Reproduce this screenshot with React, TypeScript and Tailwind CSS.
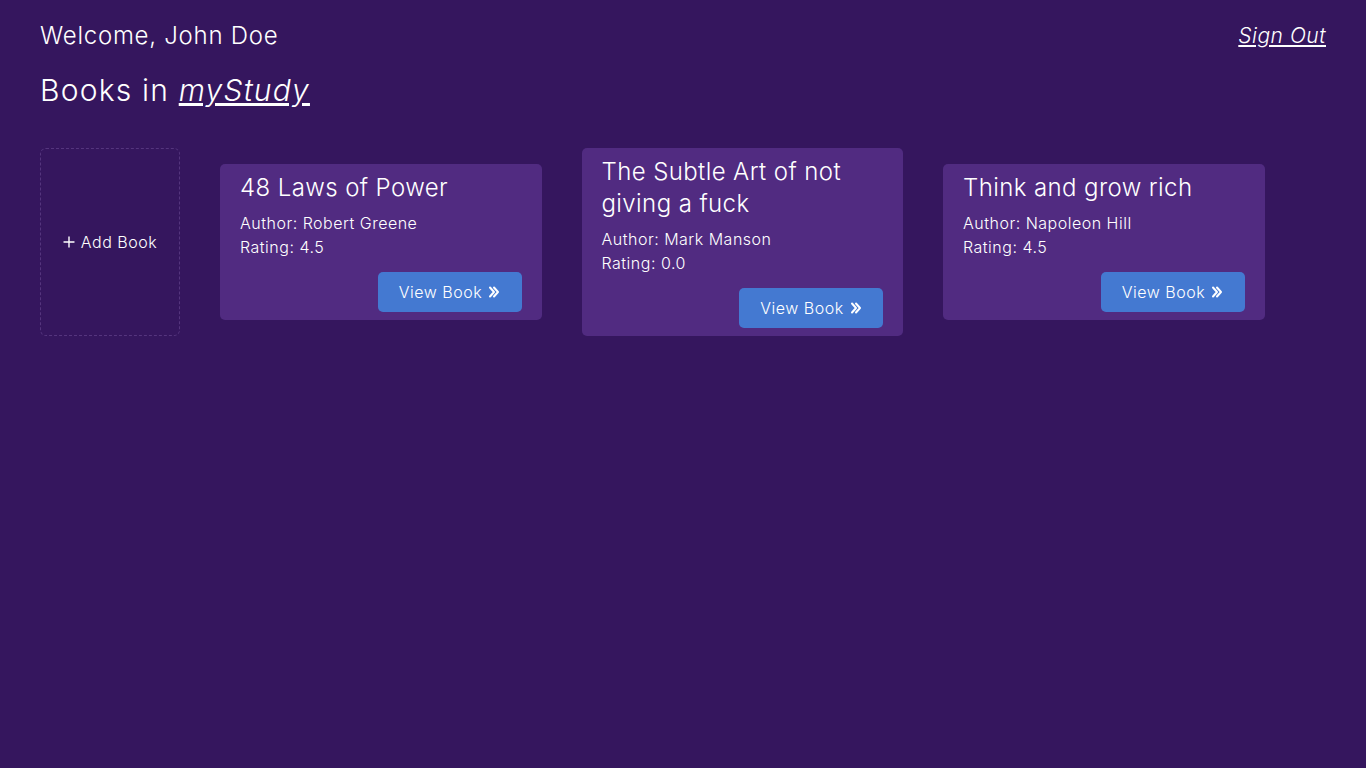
import React from "react";

const books = [
  { title: "48 Laws of Power", author: "Robert Greene", rating: "4.5" },
  { title: "The Subtle Art of not giving a fuck", author: "Mark Manson", rating: "0.0" },
  { title: "Think and grow rich", author: "Napoleon Hill", rating: "4.5" },
];

function Chevrons() {
  return (
    <svg width="12" height="14" viewBox="0 0 12 14" fill="none" stroke="currentColor" strokeWidth="2" strokeLinecap="round" strokeLinejoin="round">
      <path d="M2 2.5 L6 7 L2 11.5" />
      <path d="M6 2.5 L10 7 L6 11.5" />
    </svg>
  );
}

function Plus() {
  return (
    <svg width="12" height="12" viewBox="0 0 12 12" fill="none" stroke="currentColor" strokeWidth="1.4" strokeLinecap="round">
      <path d="M6 1 V11" />
      <path d="M1 6 H11" />
    </svg>
  );
}

export default function App() {
  return (
    <div className="min-h-screen w-full bg-[#35165e] text-white px-10 pt-[19px]" style={{ fontFamily: "Inter, 'Noto Sans', sans-serif" }}>
      <div className="flex items-center justify-between">
        <div className="text-[24px] leading-[34px] font-light tracking-[0.75px]">Welcome, John Doe</div>
        <a className="text-[21px] leading-[34px] italic underline font-light tracking-[0.5px] cursor-pointer">Sign Out</a>
      </div>
      <h1 className="mt-[18px] text-[30px] leading-[38px] font-light tracking-[1.2px]">
        Books in <span className="italic underline">myStudy</span>
      </h1>
      <div className="mt-[39px] flex items-center gap-10">
        <div className="self-stretch w-[140px] border border-dashed border-[#55357e] rounded-md flex items-center justify-center text-[16px] font-light gap-[6px] tracking-[0.5px]">
          <Plus />
          <span>Add Book</span>
        </div>
        {books.map((b) => (
          <div key={b.title} className="w-[321.5px] bg-[#512b81] rounded-[5px] px-5 pt-2 pb-2 flex flex-col">
            <div className="text-[24px] leading-[32px] font-light tracking-[0.4px]">{b.title}</div>
            <div className="mt-[7px] text-[16px] leading-[24px] font-light tracking-[0.5px]">Author: {b.author}</div>
            <div className="text-[16px] leading-[24px] font-light tracking-[0.5px]">Rating: {b.rating}</div>
            <div className="mt-[13px] flex justify-end">
              <button className="h-10 w-[144px] bg-[#4479d1] rounded-[5px] flex items-center justify-center gap-[6px] text-[16px] font-light tracking-[0.5px]">
                View Book <Chevrons />
              </button>
            </div>
          </div>
        ))}
      </div>
    </div>
  );
}
